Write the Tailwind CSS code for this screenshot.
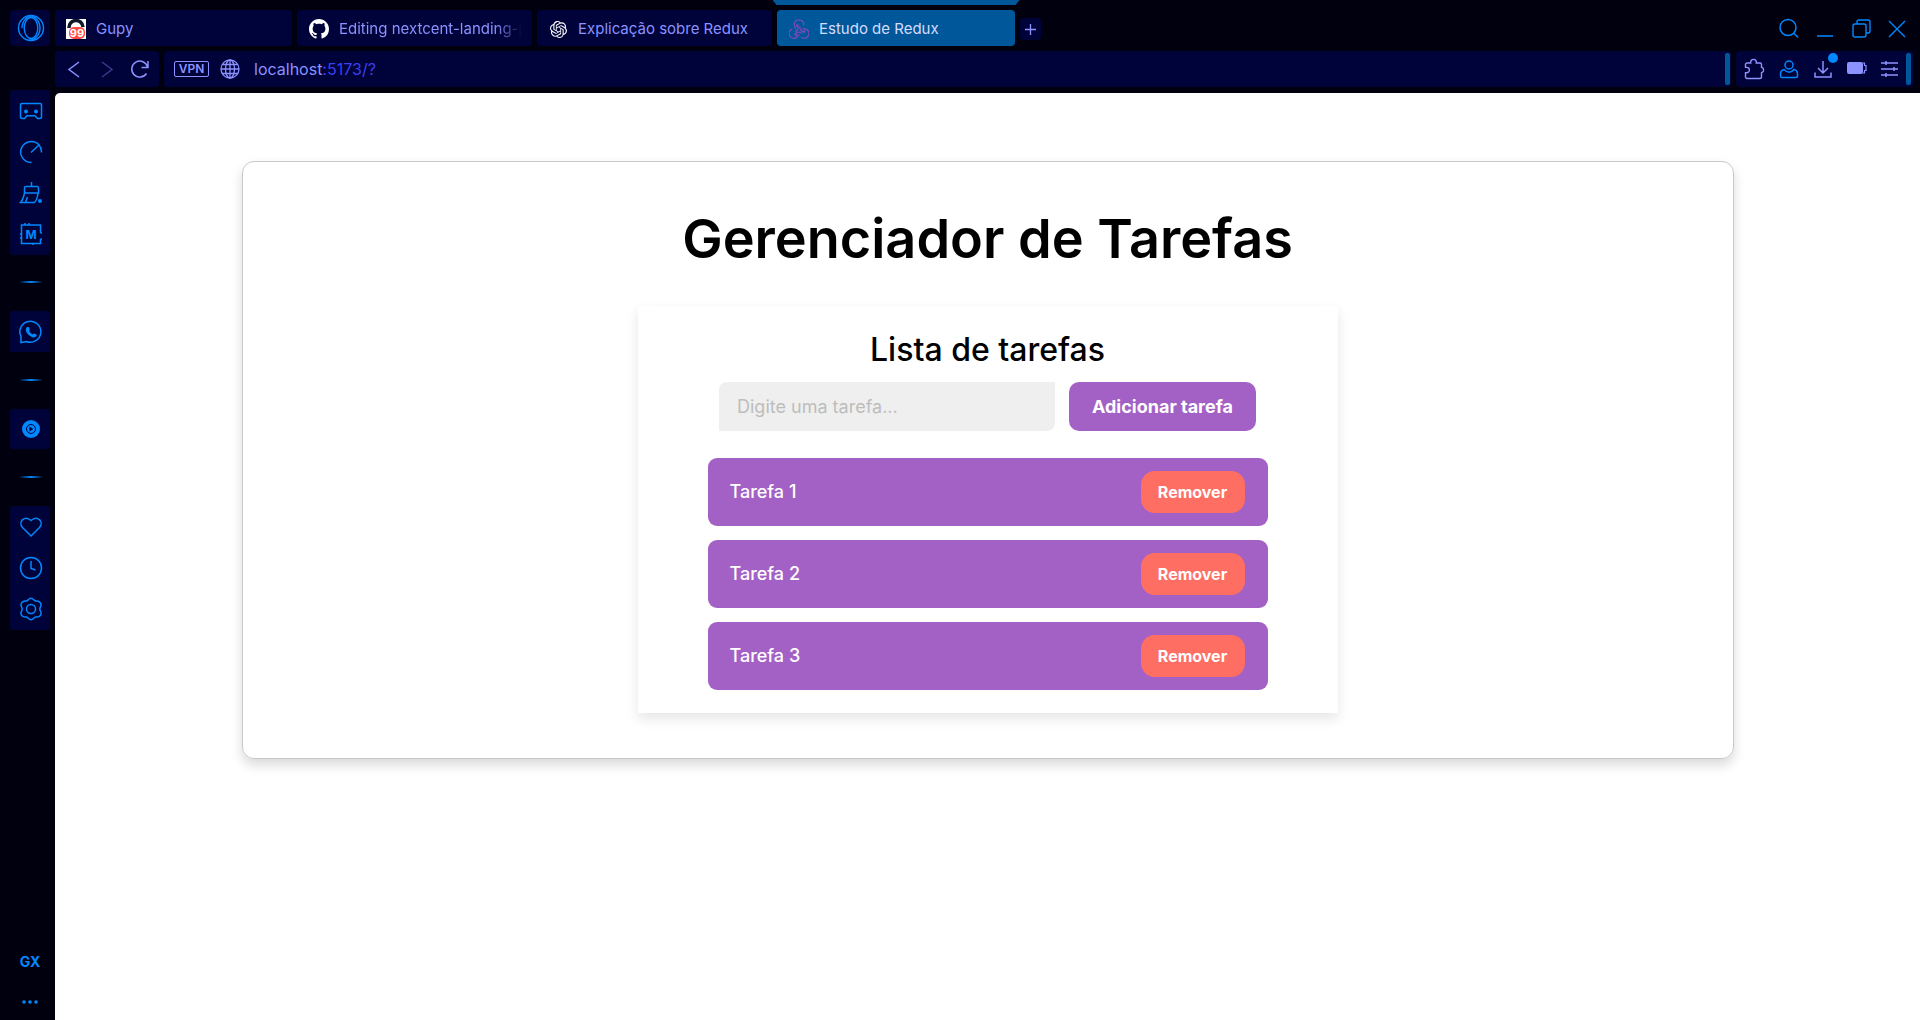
<!DOCTYPE html>
<html lang="pt-BR">
<head>
<meta charset="utf-8">
<title>Estudo de Redux</title>
<script src="https://cdn.jsdelivr.net/npm/@tailwindcss/browser@4"></script>
</head>
<body class="flex h-screen flex-col overflow-hidden bg-[#00000f] font-[Inter,sans-serif] text-[#8c92ff]">
<!-- Browser chrome -->
<header class="flex flex-col gap-[5px] pb-[6px]">
  <div class="flex h-[46px] items-end gap-[5px] pl-[10px]">
    <button aria-label="Menu" class="grid h-9 w-10 place-items-center rounded bg-[#000339] pl-[1px] text-[#0088ff]">
      <svg class="size-7" viewBox="0 0 28 28" fill="none" stroke="currentColor" stroke-width="1.4"><circle cx="14" cy="14" r="12.500"/><ellipse cx="14" cy="14" rx="6.800" ry="10.500"/><path d="M11.500 1.800C18 1.500 23 7 23 14s-5 12.500-11.500 12.200M16.500 1.800C10 1.500 5 7 5 14"/></svg>
    </button>
    <nav class="flex items-end gap-[5px] text-[15px] leading-5">
      <a href="#" class="flex h-9 w-[237px] items-center gap-[10px] rounded bg-[#000339] pt-[2px] pl-[11px]">
        <svg class="size-5" viewBox="0 0 20 20"><path fill="#fff" d="M0 0h20v20H0z"/><path d="M3 9a7 7 0 0 1 14-1" fill="none" stroke="#101828" stroke-width="3.500"/><rect x="3" y="8" width="16" height="12" rx="5" fill="#ff4b45"/><text x="11" y="18" text-anchor="middle" font-size="11" font-weight="700" fill="#fff" font-family="Inter">99</text></svg>
        Gupy
      </a>
      <a href="#" class="flex h-9 w-[235px] items-center gap-[10px] rounded bg-[#000339] pt-[2px] pr-[10px] pl-[12px]">
        <svg class="size-5 shrink-0" viewBox="0 0 16 16" fill="#fff"><path d="M8 0C3.580 0 0 3.580 0 8c0 3.540 2.290 6.530 5.470 7.590.4.070.55-.17.55-.38 0-.19-.01-.82-.01-1.490-2.010.37-2.530-.49-2.690-.94-.09-.23-.48-.94-.82-1.130-.28-.15-.68-.52-.01-.53.63-.01 1.080.58 1.230.82.72 1.210 1.870.87 2.330.66.070-.52.28-.87.51-1.070-1.780-.2-3.640-.89-3.640-3.950 0-.87.31-1.590.82-2.150-.08-.2-.36-1.020.08-2.120 0 0 .67-.21 2.200.82.64-.18 1.320-.27 2-.27s1.360.09 2 .27c1.530-1.040 2.200-.82 2.200-.82.44 1.100.16 1.920.08 2.120.51.56.82 1.270.82 2.150 0 3.070-1.870 3.750-3.650 3.950.29.25.54.73.54 1.480 0 1.070-.01 1.930-.01 2.200 0 .21.15.46.55.38A8 8 0 0 0 16 8c0-4.420-3.580-8-8-8z"/></svg>
        <span class="overflow-hidden whitespace-nowrap mask-r-from-85%">Editing nextcent-landing-page</span>
      </a>
      <a href="#" class="flex h-9 w-[235px] items-center gap-[11px] rounded bg-[#000339] pt-[2px] pl-[13px]">
        <svg class="size-[17px]" viewBox="0 0 24 24" fill="#fff"><path d="M22.2819 9.8211a5.9847 5.9847 0 0 0-.5157-4.9108 6.0462 6.0462 0 0 0-6.5098-2.9A6.0651 6.0651 0 0 0 4.9807 4.1818a5.9847 5.9847 0 0 0-3.9977 2.9 6.0462 6.0462 0 0 0 .7427 7.0966 5.98 5.98 0 0 0 .511 4.9107 6.051 6.051 0 0 0 6.5146 2.9001A5.9847 5.9847 0 0 0 13.2599 24a6.0557 6.0557 0 0 0 5.7718-4.2058 5.9894 5.9894 0 0 0 3.9977-2.9001 6.0557 6.0557 0 0 0-.7475-7.0729zm-9.022 12.6081a4.4755 4.4755 0 0 1-2.8764-1.0408l.1419-.0804 4.7783-2.7582a.7948.7948 0 0 0 .3927-.6813v-6.7369l2.02 1.1686a.071.071 0 0 1 .038.052v5.5826a4.504 4.504 0 0 1-4.4945 4.4944zm-9.6607-4.1254a4.4708 4.4708 0 0 1-.5346-3.0137l.142.0852 4.783 2.7582a.7712.7712 0 0 0 .7806 0l5.8428-3.3685v2.3324a.0804.0804 0 0 1-.0332.0615L9.74 19.9502a4.4992 4.4992 0 0 1-6.1408-1.6464zM2.3408 7.8956a4.485 4.485 0 0 1 2.3655-1.9728V11.6a.7664.7664 0 0 0 .3879.6765l5.8144 3.3543-2.0201 1.1685a.0757.0757 0 0 1-.071 0l-4.8303-2.7865A4.504 4.504 0 0 1 2.3408 7.872zm16.5963 3.8558L13.1038 8.364 15.1192 7.2a.0757.0757 0 0 1 .071 0l4.8303 2.7913a4.4944 4.4944 0 0 1-.6765 8.1042v-5.6772a.79.79 0 0 0-.407-.667zm2.0107-3.0231l-.142-.0852-4.7735-2.7818a.7759.7759 0 0 0-.7854 0L9.409 9.2297V6.8974a.0662.0662 0 0 1 .0284-.0615l4.8303-2.7866a4.4992 4.4992 0 0 1 6.6802 4.66zM8.3065 12.863l-2.02-1.1638a.0804.0804 0 0 1-.038-.0567V6.0742a4.4992 4.4992 0 0 1 7.3757-3.4537l-.142.0805L8.704 5.459a.7948.7948 0 0 0-.3927.6813zm1.0976-2.3654l2.602-1.4998 2.6069 1.4998v2.9994l-2.5974 1.4997-2.6067-1.4997Z"/></svg>
        Explicação sobre Redux
      </a>
      <div class="flex h-[46px] flex-col items-center justify-between">
        <div class="-mx-[5px] h-[5px] w-[247px] bg-[#005799] [clip-path:polygon(0_0,100%_0,calc(100%-4px)_100%,4px_100%)]"></div>
        <a href="#" aria-current="page" class="flex h-9 w-[238px] items-center gap-[10px] rounded bg-[#005799] pt-[2px] pl-[12px] text-[#d5dcff]">
          <svg class="size-5" viewBox="0 0 20 20" fill="none" stroke="#764abc" stroke-width="1.300" stroke-linecap="round"><g id="lobe"><path d="M6.500 12.500C9.500 10.500 10 8.500 8.500 6.800"/><path d="M6.500 9.200C3.500 4 6.500.8 10 .8c3 0 5 2.200 4.600 5"/><circle cx="8.300" cy="6.600" r=".8" fill="#764abc"/></g><use href="#lobe" transform="rotate(120 10 11.500)"/><use href="#lobe" transform="rotate(240 10 11.500)"/></svg>
          Estudo de Redux
        </a>
      </div>
      <button aria-label="Nova aba" class="mb-[6px] grid h-[22px] w-[21px] place-items-center rounded bg-[#000339]">
        <svg class="size-[11px]" viewBox="0 0 11 11" stroke="currentColor" stroke-width="1.300"><path d="M5.500 0v11M0 5.500h11"/></svg>
      </button>
    </nav>
    <div class="mr-[12px] mb-[7px] ml-auto flex items-center gap-[14px] text-[#0088ff]">
      <button aria-label="Buscar"><svg class="size-[22px]" viewBox="0 0 22 22" fill="none" stroke="currentColor" stroke-width="1.500"><circle cx="10" cy="10.500" r="8"/><path d="m16 16.500 4 4"/></svg></button>
      <button aria-label="Minimizar"><svg class="size-[22px]" viewBox="0 0 22 22" stroke="currentColor" stroke-width="1.500"><path d="M3 19h16"/></svg></button>
      <button aria-label="Restaurar"><svg class="size-[22px]" viewBox="0 0 22 22" fill="none" stroke="currentColor" stroke-width="1.400"><rect x="3" y="7" width="13" height="13" rx="2"/><path d="M7 7V5a2 2 0 0 1 2-2h9a2 2 0 0 1 2 2v9a2 2 0 0 1-2 2h-2"/></svg></button>
      <button aria-label="Fechar"><svg class="size-[22px]" viewBox="0 0 22 22" stroke="currentColor" stroke-width="1.400"><path d="m3 4 16 16M19 4 3 20"/></svg></button>
    </div>
  </div>
  <div class="flex h-9 gap-[5px] pr-[6px] pl-[55px]">
    <div class="flex w-[104px] items-center justify-between rounded bg-[#000339] px-[9px]">
      <button aria-label="Voltar"><svg class="size-5" viewBox="0 0 20 20" fill="none" stroke="currentColor" stroke-width="1.500"><path d="M15 3 5 10.500 15 18"/></svg></button>
      <button aria-label="Avançar" class="opacity-40"><svg class="size-5" viewBox="0 0 20 20" fill="none" stroke="currentColor" stroke-width="1.500"><path d="m5 3 10 7.500L5 18"/></svg></button>
      <button aria-label="Recarregar"><svg class="size-5" viewBox="0 0 20 20" fill="none" stroke="currentColor" stroke-width="1.500"><path d="M16.500 14.500A8 8 0 1 1 17.500 8M18 2v6.500h-6.500"/></svg></button>
    </div>
    <div class="flex flex-1 items-center rounded bg-[#000339] pr-[1px] pl-[10px]">
      <button class="h-4 w-[35px] rounded-xs border border-current text-center text-xs leading-[14px] font-semibold">VPN</button>
      <svg class="ml-[11px] size-5" viewBox="0 0 20 20" fill="none" stroke="currentColor" stroke-width="1.300"><circle cx="10" cy="10" r="9"/><ellipse cx="10" cy="10" rx="4.500" ry="9"/><path d="M10 1v18M1 10h18M2.500 5.500h15M2.500 14.500h15"/></svg>
      <a href="#" class="ml-[14px] text-base leading-5">localhost<span class="text-[#3a3ff0]">:5173/?</span></a>
      <div class="ml-auto h-8 w-[5px] rounded-xs bg-[#005799]"></div>
    </div>
    <div class="flex w-[178px] items-center gap-3 rounded bg-[#000339] pl-2">
      <button aria-label="Extensões"><svg class="size-[22px]" viewBox="0 0 22 22" fill="none" stroke="currentColor" stroke-width="1.400"><path d="M3 5h3.700a2.900 2.900 0 1 1 5.600 0H16a1.500 1.500 0 0 1 1.500 1.500v2.700a2.900 2.900 0 0 1 0 5.600V19a1.500 1.500 0 0 1-1.500 1.500H3A1.500 1.500 0 0 1 1.500 19v-4.200h1.200a2.700 2.700 0 0 0 0-5.400H1.500V6.500A1.500 1.500 0 0 1 3 5z"/></svg></button>
      <button aria-label="Perfil" class="text-[#0088ff]"><svg class="size-[22px]" viewBox="0 0 22 22" fill="none" stroke="currentColor" stroke-width="1.500"><circle cx="11" cy="7" r="4"/><path d="M6 11.500c-2.500.5-3.500 2-3.500 4.500v2q0 1.500 1.500 1.500h14q1.500 0 1.500-1.500v-2c0-2.500-1-4-3.500-4.500q-4.500 5.500-10 0z"/></svg></button>
      <button aria-label="Downloads" class="relative"><svg class="size-[22px]" viewBox="0 0 22 22" fill="none" stroke="currentColor" stroke-width="1.500"><path d="M11 3v12M6 10l5 5 5-5M3 14.500V19h16v-4.500"/></svg><span class="absolute -top-[5px] -right-1 size-[10px] rounded-full bg-[#0088ff]"></span></button>
      <svg class="size-[22px]" viewBox="0 0 22 22"><rect x="1" y="4" width="16" height="12" rx="2" fill="currentColor"/><path d="M17 5h1.500v2.500H20v5h-1.500V15H17" fill="none" stroke="currentColor" stroke-width="1.200"/></svg>
      <button aria-label="Configurar"><svg class="size-[22px]" viewBox="0 0 22 22" fill="none" stroke="currentColor" stroke-width="1.500"><path d="M1 5h17M1 11h17M1 17h17M6 3v4M14 9v4M6 15v4"/></svg></button>
      <div class="-ml-2 h-8 w-[5px] rounded-xs bg-[#005799]"></div>
    </div>
  </div>
</header>

<div class="flex min-h-0 flex-1">
  <!-- Sidebar -->
  <aside class="-mt-[3px] flex w-[55px] shrink-0 flex-col pl-[10px] text-[#0088ff]">
    <div class="flex w-10 flex-col rounded-xs bg-[#000339] pl-[1px]">
      <button aria-label="GX Corner" class="grid h-[41px] place-items-center"><svg class="size-6" viewBox="0 0 24 24" fill="none" stroke="currentColor" stroke-width="1.500"><path d="M3 4.500h18q1.500 0 1.500 1.500v12q0 1.500-1.500 1.500h-2.500L16 16.800H8l-2.500 2.700H3q-1.500 0-1.500-1.500V6q0-1.500 1.500-1.500z"/><circle cx="7" cy="12.500" r="2" fill="currentColor" stroke="none"/><circle cx="17" cy="12.500" r="2" fill="currentColor" stroke="none"/></svg></button>
      <button aria-label="GX Control" class="grid h-[41px] place-items-center"><svg class="size-6" viewBox="0 0 24 24" fill="none" stroke="currentColor" stroke-width="1.500"><path d="M12.500 22.500A10.500 10.500 0 1 1 20 5L12 12.500M20 5a10.500 10.500 0 0 1 2.500 7.500"/></svg></button>
      <button aria-label="GX Cleaner" class="grid h-[41px] place-items-center"><svg class="size-6" viewBox="0 0 24 24" fill="none" stroke="currentColor" stroke-width="1.500"><path d="M12.500 1v4.500M5.500 12V7q0-1.500 1.500-1.500h11q1.500 0 1.500 1.500v5zM5.500 12C4.500 16 4 19 1.500 21.500h14c1.500-1.500 3-5 3.500-9.500M6.500 21.500 8.500 16"/><circle cx="21" cy="20" r="2" fill="currentColor" stroke="none"/></svg></button>
      <button aria-label="Mods" class="grid h-[42px] place-items-center"><svg class="size-6" viewBox="0 0 24 24" fill="none" stroke="currentColor" stroke-width="1.500"><path d="M21.500 11V3H2.500v18.500h19V17M6 3V1M10 3V1M2.500 12H1M2.500 16H1M21.500 11H23M21.500 17H23M14 21.500V23"/><text x="12" y="16.500" text-anchor="middle" font-size="12" font-weight="700" fill="currentColor" stroke="none" font-family="Inter">M</text></svg></button>
    </div>
    <div class="mt-[26px] mb-[28px] ml-[9px] h-[2px] w-6 bg-linear-to-r from-transparent via-[#0088ff] to-transparent"></div>
    <button aria-label="WhatsApp" class="grid h-[41px] w-10 place-items-center rounded-xs bg-[#000339] pl-[1px]"><svg class="size-6" viewBox="0 0 24 24" fill="none" stroke="currentColor" stroke-width="1.500"><path d="M2 22.500v-6A10.500 10.500 0 1 1 7.500 21.500z"/><path d="M7.500 7.500c1-1.200 2-1 2.500 0l.8 1.800q.2.700-.8 1.700 1.500 2.500 3.800 3.500.9-1.200 1.500-1l2 1q.9.600 0 1.800c-2 2.200-5.500.8-7.800-1.500s-3.700-5-2-7.300z" fill="currentColor" stroke="none"/></svg></button>
    <div class="mt-[27px] mb-[28px] ml-[9px] h-[2px] w-6 bg-linear-to-r from-transparent via-[#0088ff] to-transparent"></div>
    <button aria-label="Player" class="grid h-10 w-10 place-items-center rounded-xs bg-[#000339] pl-[1px]"><svg class="size-6" viewBox="0 0 24 24"><circle cx="12" cy="12" r="9" fill="currentColor"/><circle cx="12" cy="12" r="4.500" fill="none" stroke="#000339"/><path d="m10.300 9.500 4 2.500-4 2.500z" fill="#000339"/></svg></button>
    <div class="mt-[27px] mb-[28px] ml-[9px] h-[2px] w-6 bg-linear-to-r from-transparent via-[#0088ff] to-transparent"></div>
    <div class="flex w-10 flex-col rounded-xs bg-[#000339] pl-[1px]">
      <button aria-label="Favoritos" class="grid h-[41px] place-items-center"><svg class="size-6" viewBox="0 0 24 24" fill="none" stroke="currentColor" stroke-width="1.500"><path d="M12 21 3.500 12.500C-1.500 6.500 6 0 12 5.500c6-5.500 13.500 1 8.500 7z"/></svg></button>
      <button aria-label="Histórico" class="grid h-[41px] place-items-center"><svg class="size-6" viewBox="0 0 24 24" fill="none" stroke="currentColor" stroke-width="1.500"><circle cx="12" cy="12" r="10.500"/><path d="M12 5v7.500l4.500 1.500"/></svg></button>
      <button aria-label="Configurações" class="grid h-[42px] place-items-center"><svg class="size-6" viewBox="0 0 24 24" fill="none" stroke="currentColor" stroke-width="1.500" stroke-linejoin="round"><path d="M9.300 2.800q2.700-3 5.400 0 .8 1 2 1.100 4.400-.3 5.300 3.200.3 1.500-.6 2.700-1.300 2.200 0 4.400.9 1.200.6 2.700-.9 3.500-5.300 3.200-1.200.1-2 1.100-2.700 3-5.400 0-.8-1-2-1.100-4.400.3-5.300-3.200-.3-1.500.6-2.700 1.300-2.200 0-4.400-.9-1.200-.6-2.700.9-3.500 5.300-3.200 1.200-.1 2-1.100z"/><circle cx="12" cy="12" r="4.500"/></svg></button>
    </div>
    <div class="mt-auto mb-[10px] flex w-10 flex-col items-center gap-[22px]">
      <button class="text-sm leading-5 font-bold">GX</button>
      <button aria-label="Mais"><svg class="h-4 w-5" viewBox="0 0 20 16" fill="currentColor"><circle cx="4" cy="8" r="1.800"/><circle cx="10" cy="8" r="1.800"/><circle cx="16" cy="8" r="1.800"/></svg></button>
    </div>
  </aside>

  <!-- Page -->
  <main class="flex-1 rounded-tl-[5px] bg-white pt-[68px] text-black">
    <section class="mx-auto w-4/5 rounded-xl border border-[#c8c8c8] pt-[44px] pb-[45px] shadow-[0_6px_12px_rgba(0,0,0,0.15)]">
      <h1 class="text-center text-[54px] leading-[66px] font-semibold">Gerenciador de Tarefas</h1>
      <div class="mx-auto mt-[34px] max-w-[700px] px-[70px] pt-[24px] pb-[23px] shadow-[0_6px_12px_rgba(0,0,0,0.1)]">
        <h2 class="text-center text-[32px] leading-10 font-medium">Lista de tarefas</h2>
        <form class="mt-[12px] flex h-[49px] justify-center gap-[14px]">
          <input type="text" aria-label="Tarefa" placeholder="Digite uma tarefa..." class="w-[336px] rounded-tl-lg rounded-br-lg bg-[#efefef] px-[18px] text-lg placeholder:text-[#bdbdbd]">
          <button type="button" class="w-[187px] rounded-[10px] bg-[#a461c5] text-lg font-bold text-white">Adicionar tarefa</button>
        </form>
        <ul class="mt-[27px] flex flex-col gap-[14px] text-lg text-white">
          <li class="flex h-[68px] items-center justify-between rounded-[9px] bg-[#a461c5] pr-[23px] pl-[22px] font-medium">Tarefa 1<button class="h-[42px] w-[104px] rounded-[14px] bg-[#ff6e63] text-base font-bold">Remover</button></li>
          <li class="flex h-[68px] items-center justify-between rounded-[9px] bg-[#a461c5] pr-[23px] pl-[22px] font-medium">Tarefa 2<button class="h-[42px] w-[104px] rounded-[14px] bg-[#ff6e63] text-base font-bold">Remover</button></li>
          <li class="flex h-[68px] items-center justify-between rounded-[9px] bg-[#a461c5] pr-[23px] pl-[22px] font-medium">Tarefa 3<button class="h-[42px] w-[104px] rounded-[14px] bg-[#ff6e63] text-base font-bold">Remover</button></li>
        </ul>
      </div>
    </section>
  </main>
</div>
</body>
</html>
